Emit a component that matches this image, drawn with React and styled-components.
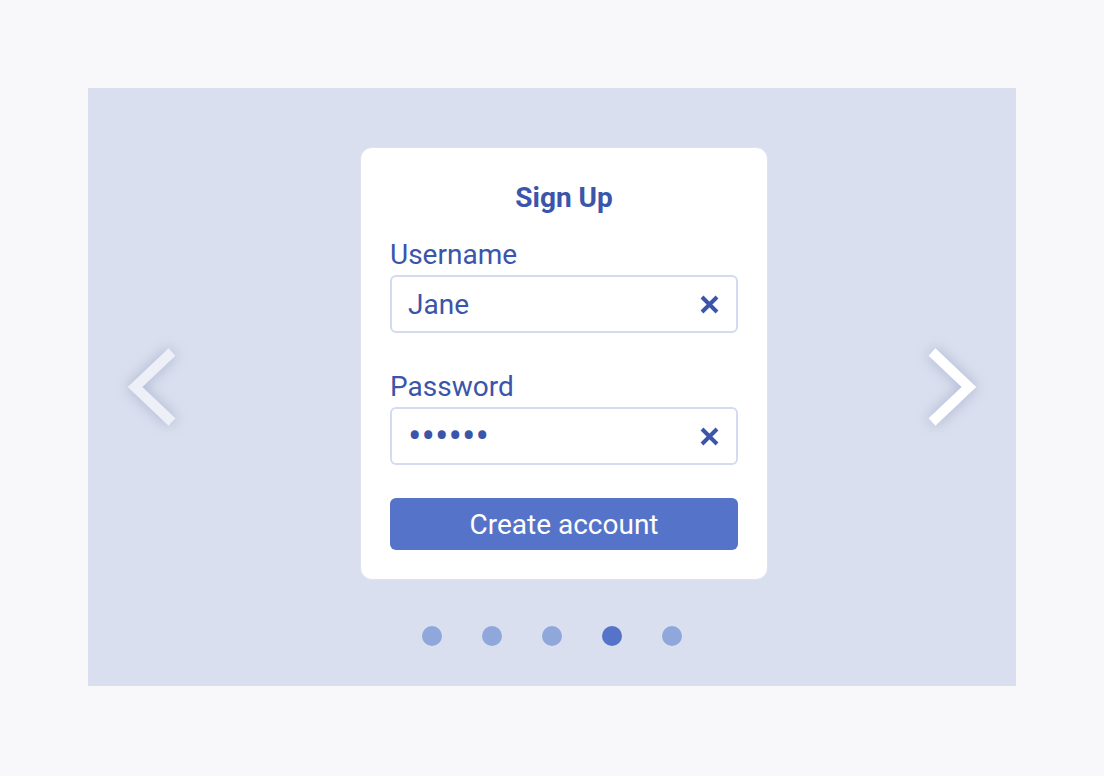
import React from 'react';
import styled, { createGlobalStyle } from 'styled-components';

const GlobalStyle = createGlobalStyle`
    html, body {
        margin: 0;
        padding: 0;
        background-color: #f8f8fa;
        font-family: Roboto, "Liberation Sans", sans-serif;
    }
`;

const Page = styled.div`
    padding: 88px;
    width: 928px;
    height: 598px;
`;

// carousel area, arrows on the sides, slide in the middle
const Stage = styled.div`
    display: grid;
    grid-template-columns: 128px 1fr 128px;
    align-items: center;
    width: 100%;
    height: 100%;
    background-color: #d9dfee;
`;

const ArrowButton = styled.button`
    display: flex;
    justify-content: center;
    align-items: center;
    background: none;
    border: none;
    padding: 0;
    cursor: pointer;
    color: ${props => props.dim ? '#eef0f7' : '#ffffff'};

    svg {
        filter: drop-shadow(0 0 7px rgba(80, 92, 150, 0.35));
    }
`;

const SlideColumn = styled.div`
    display: flex;
    flex-direction: column;
    align-items: center;
    padding: 59px 0 40px;
`;

const Card = styled.form`
    box-sizing: border-box;
    width: 408px;
    height: 433px;
    margin-left: 24px;
    padding: 34px 29px 29px;
    background-color: #fff;
    border: 1px solid #dfe3ef;
    border-radius: 12px;
    display: flex;
    flex-direction: column;
`;

const Title = styled.h2`
    margin: 0 0 25px;
    font-size: 28px;
    line-height: 32px;
    font-weight: 700;
    text-align: center;
    color: #3a55a9;
`;

const Field = styled.label`
    display: flex;
    flex-direction: column;
    gap: 4px;
    margin-bottom: ${props => props.last ? '33px' : '38px'};
`;

const LabelText = styled.span`
    font-size: 28px;
    line-height: 32px;
    color: #3a55a9;
`;

const InputBox = styled.div`
    box-sizing: border-box;
    height: 58px;
    display: flex;
    align-items: center;
    padding: 0 17px 0 16px;
    border: 2px solid #d3dbee;
    border-radius: 6px;
    background-color: #fff;
`;

const TextInput = styled.input`
    flex: 1;
    min-width: 0;
    border: none;
    outline: none;
    padding: 0;
    background: transparent;
    font-family: Roboto, "Liberation Sans", sans-serif;
    font-size: ${props => props.masked ? '40px' : '28px'};
    color: #3a55a9;
`;

const ClearButton = styled.span`
    display: flex;
    color: #3a55a9;
    cursor: pointer;
`;

const SubmitButton = styled.button`
    height: 52px;
    border: none;
    border-radius: 6px;
    background-color: #5573c8;
    color: #fff;
    font-family: Roboto, "Liberation Sans", sans-serif;
    font-size: 28px;
    cursor: pointer;
`;

const Dots = styled.div`
    display: flex;
    gap: 40px;
    margin-top: 46px;
`;

const Dot = styled.span`
    width: 20px;
    height: 20px;
    border-radius: 50%;
    background-color: ${props => props.active ? '#5573c8' : '#8fa7da'};
`;

const Chevron = ({ right }) => (
    <svg width="60" height="92" viewBox="0 0 60 92">
        <polyline
            points={right ? '10,11 47,46 10,81' : '50,11 13,46 50,81'}
            fill="none"
            stroke="currentColor"
            strokeWidth="10"
            strokeLinejoin="miter"
            strokeLinecap="butt"
        />
    </svg>
);

const ClearIcon = () => (
    <svg width="19" height="19" viewBox="0 0 19 19">
        <path d="M2 2 L17 17 M17 2 L2 17" stroke="currentColor" strokeWidth="4" />
    </svg>
);

const slides = [0, 1, 2, 3, 4];

const App = () => {
    const activeSlide = 3;

    return (
        <Page>
            <GlobalStyle />
            <Stage>
                <ArrowButton dim aria-label="previous">
                    <Chevron />
                </ArrowButton>

                <SlideColumn>
                    <Card onSubmit={e => e.preventDefault()}>
                        <Title>Sign Up</Title>

                        <Field>
                            <LabelText>Username</LabelText>
                            <InputBox>
                                <TextInput type="text" value="Jane" readOnly />
                                <ClearButton><ClearIcon /></ClearButton>
                            </InputBox>
                        </Field>

                        <Field last>
                            <LabelText>Password</LabelText>
                            <InputBox>
                                <TextInput type="text" value="••••••" readOnly masked />
                                <ClearButton><ClearIcon /></ClearButton>
                            </InputBox>
                        </Field>

                        <SubmitButton type="submit">Create account</SubmitButton>
                    </Card>

                    <Dots>
                        {slides.map(i => (
                            <Dot key={i} active={i === activeSlide} />
                        ))}
                    </Dots>
                </SlideColumn>

                <ArrowButton aria-label="next">
                    <Chevron right />
                </ArrowButton>
            </Stage>
        </Page>
    );
};

export default App;
